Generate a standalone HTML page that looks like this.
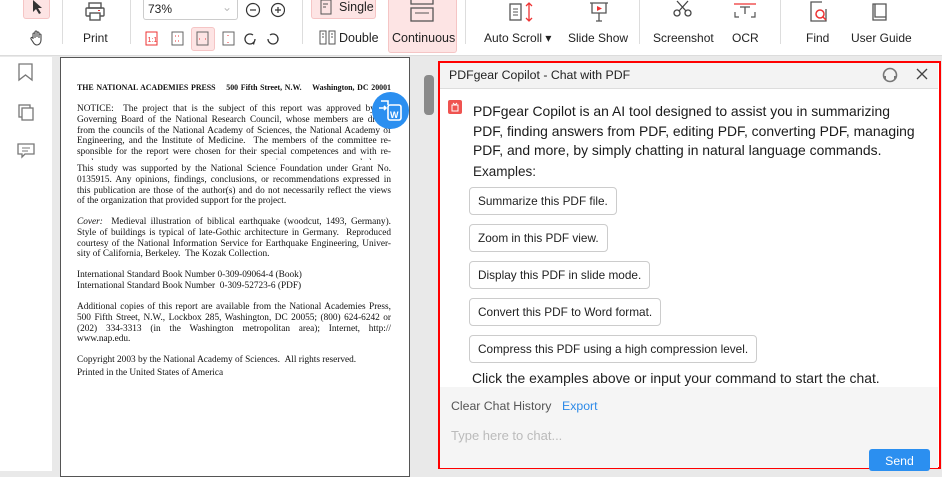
<!DOCTYPE html>
<html><head><meta charset="utf-8"><style>
*{box-sizing:border-box;margin:0;padding:0}
body{width:942px;height:471px;overflow:hidden;background:#e9e9e9;font-family:"Liberation Sans",sans-serif;position:relative;color:#222}
.a{position:absolute}
.tb{left:0;top:0;width:942px;height:56px;background:#fff;border-bottom:1px solid #dcdcdc}
.lbl{position:absolute;font-size:12px;color:#222;white-space:nowrap}
.sep{position:absolute;top:0;width:1px;height:44px;background:#ddd}
.pg{left:60px;top:57px;width:350px;height:420px;background:#fff;border:1px solid #555;font-family:"Liberation Serif",serif;font-size:9.3px;line-height:10.8px;color:#111}
.pg p{position:absolute;left:16px;width:314px}
.pg p span{display:block;height:10.8px;overflow:hidden;text-align:justify;text-align-last:justify}
.pg p span.l{text-align-last:left}
.chat{left:438px;top:61px;width:503px;height:408px;border:2.5px solid #f00;background:#fff}
.btn{position:absolute;left:29px;height:28px;border:1px solid #ccc;border-radius:4px;font-size:11.8px;padding:0 8px;line-height:26px;background:#fff;white-space:nowrap}
</style></head><body>
<div class="a tb">
  <div class="a" style="left:23px;top:0;width:27px;height:19px;background:#fde4e4;border:1px solid #f5c5c5;border-top:none;border-radius:0 0 3px 3px"></div>
  <svg class="a" style="left:31px;top:0" width="12" height="14"><path d="M2 0 L2 12 L5 9 L8 14 L10 13 L7 8 L11 8 Z" fill="#333"/></svg>
  <svg style="position:absolute;left:29px;top:29px" width="18" height="18"><path d="M4 10 V5 a1 1 0 0 1 2 0 V9 M6 8 V3 a1 1 0 0 1 2 0 V8 M8 8 V4 a1 1 0 0 1 2 0 V9 M10 9 V6 a1 1 0 0 1 2 0 V11 c0 3 -2 5 -4 5 c-2 0 -3 -1 -4 -3 L2 10 a1 1 0 0 1 2 -1" fill="none" stroke="#444" stroke-width="1.1"/></svg>
  <div class="sep" style="left:62px"></div>
  <svg class="a" style="left:84px;top:2px" width="22" height="20"><rect x="5" y="1" width="12" height="5" fill="none" stroke="#555" stroke-width="1.4"/><rect x="2" y="6" width="18" height="8" rx="1" fill="none" stroke="#555" stroke-width="1.4"/><rect x="6" y="11" width="10" height="7" fill="#fff" stroke="#555" stroke-width="1.4"/><rect x="14" y="8" width="2" height="1" fill="#e33"/></svg>
  <div class="lbl" style="left:83px;top:31px">Print</div>
  <div class="sep" style="left:130px"></div>
  <div class="a" style="left:143px;top:0;width:95px;height:20px;border:1px solid #ccc;border-top:none;border-radius:0 0 3px 3px;font-size:12px;padding:2px 4px">73%<span style="position:absolute;right:5px;top:0;color:#bbb">⌄</span></div>
  <svg class="a" style="left:245px;top:2px" width="40" height="16"><circle cx="8" cy="8" r="6.5" fill="none" stroke="#333" stroke-width="1.2"/><path d="M5 8h6" stroke="#333" stroke-width="1.2"/><circle cx="33" cy="8" r="6.5" fill="none" stroke="#333" stroke-width="1.2"/><path d="M30 8h6M33 5v6" stroke="#333" stroke-width="1.2"/></svg>
  <div class="a" style="left:191px;top:27px;width:24px;height:24px;background:#fde4e4;border:1px solid #f5c5c5;border-radius:3px"></div>
  <svg class="a" style="left:145px;top:31px" width="150" height="16">
   <rect x="1" y="1" width="11" height="13" fill="none" stroke="#e33" stroke-width="1"/><text x="2.5" y="11" font-size="7" fill="#e33" font-family="Liberation Sans">1:1</text>
   <rect x="27" y="1" width="11" height="13" fill="none" stroke="#666"/><path d="M30 5h5M30 10h5" stroke="#e33" stroke-dasharray="1 2"/>
   <rect x="52" y="1" width="11" height="13" fill="none" stroke="#666"/><path d="M54 8h1M60 8h1" stroke="#e33"/>
   <rect x="78" y="1" width="11" height="13" fill="none" stroke="#666"/><path d="M83 4v1M83 11v1" stroke="#e33"/>
   <path d="M110 8a5 5 0 1 1 -2 -4" fill="none" stroke="#333" stroke-width="1.3"/><path d="M107 12 l3 -2 -1 4z" fill="#333"/>
   <path d="M123 8a5 5 0 1 0 2 -4" fill="none" stroke="#333" stroke-width="1.3"/>
  </svg>
  <div class="sep" style="left:302px"></div>
  <div class="a" style="left:311px;top:0;width:65px;height:19px;background:#fde4e4;border:1px solid #f5c5c5;border-top:none;border-radius:0 0 3px 3px"></div>
  <svg class="a" style="left:320px;top:0" width="12" height="16"><rect x="1" y="0" width="10" height="14" fill="none" stroke="#555"/><path d="M3 4h5M3 7h3" stroke="#555"/></svg>
  <div class="lbl" style="left:339px;top:0;font-size:12.5px">Single</div>
  <svg class="a" style="left:319px;top:30px" width="18" height="15"><rect x="1" y="1" width="6" height="13" fill="none" stroke="#555"/><rect x="10" y="1" width="6" height="13" fill="none" stroke="#555"/><path d="M3 4h2M12 4h2M3 7h2M12 7h2" stroke="#555"/></svg>
  <div class="lbl" style="left:339px;top:31px;font-size:12.5px">Double</div>
  <div class="a" style="left:388px;top:0;width:69px;height:53px;background:#fde4e4;border:1px solid #f5c5c5;border-top:none;border-radius:0 0 3px 3px"></div>
  <svg class="a" style="left:409px;top:0" width="26" height="22"><path d="M2 0v4h22v-4" fill="none" stroke="#555" stroke-width="1.3"/><rect x="2" y="8" width="22" height="13" fill="none" stroke="#555" stroke-width="1.3"/><path d="M6 13h14" stroke="#555"/></svg>
  <div class="lbl" style="left:392px;top:31px;font-size:12.5px">Continuous</div>
  <div class="sep" style="left:465px"></div>
  <svg class="a" style="left:507px;top:1px" width="26" height="22"><rect x="3" y="3" width="11" height="16" fill="none" stroke="#555" stroke-width="1.3"/><path d="M6 8h5M6 11h5M6 14h5" stroke="#555"/><path d="M22 2v18M19 5l3 -3 3 3M19 17l3 3 3 -3" fill="none" stroke="#e33" stroke-width="1.3"/></svg>
  <div class="lbl" style="left:484px;top:31px">Auto Scroll ▾</div>
  <svg class="a" style="left:588px;top:1px" width="22" height="22"><path d="M2 2h18M4 2v10h14V2M11 12v8M8 20h6" fill="none" stroke="#555" stroke-width="1.3"/><path d="M9 5l5 2.5 -5 2.5z" fill="#e33"/></svg>
  <div class="lbl" style="left:568px;top:31px">Slide Show</div>
  <div class="sep" style="left:639px"></div>
  <svg class="a" style="left:672px;top:0" width="22" height="18"><circle cx="5" cy="13" r="3" fill="none" stroke="#444" stroke-width="1.3"/><circle cx="16" cy="13" r="3" fill="none" stroke="#444" stroke-width="1.3"/><path d="M7 11L16 1M14 11L5 1" stroke="#444" stroke-width="1.3"/></svg>
  <div class="lbl" style="left:653px;top:31px">Screenshot</div>
  <svg class="a" style="left:733px;top:0" width="24" height="20"><path d="M1 4h22" stroke="#e33" stroke-width="1.3"/><path d="M7 7h10M12 7v7" stroke="#555" stroke-width="1.3"/><path d="M2 12v5h4M22 12v5h-4" fill="none" stroke="#555" stroke-width="1.2"/></svg>
  <div class="lbl" style="left:732px;top:31px">OCR</div>
  <div class="sep" style="left:780px"></div>
  <svg class="a" style="left:808px;top:1px" width="22" height="22"><path d="M14 1H3v19h15V8" fill="none" stroke="#555" stroke-width="1.3"/><circle cx="12" cy="13" r="4" fill="none" stroke="#e33" stroke-width="1.5"/><path d="M15 16l3 3" stroke="#e33" stroke-width="1.5"/></svg>
  <div class="lbl" style="left:806px;top:31px">Find</div>
  <svg class="a" style="left:870px;top:1px" width="20" height="22"><path d="M3 3h13v16H3zM5 3v13h11" fill="none" stroke="#555" stroke-width="1.3"/></svg>
  <div class="lbl" style="left:851px;top:31px">User Guide</div>
</div>
<div class="a" style="left:0;top:57px;width:52px;height:414px;background:#fff"></div>
<svg class="a" style="left:16px;top:62px" width="20" height="110"><path d="M3 2h13v16l-6.5-5L3 18z" fill="none" stroke="#777" stroke-width="1.3"/><rect x="3" y="43" width="11" height="12" fill="none" stroke="#777" stroke-width="1.3"/><rect x="6" y="46" width="11" height="12" fill="#fff" stroke="#777" stroke-width="1.3"/><path d="M2 82h16v10h-9l-3 3v-3H2z" fill="none" stroke="#777" stroke-width="1.3"/><path d="M6 86h8M6 89h6" stroke="#777"/></svg>
<div class="a pg">
  <p style="top:25px;font-weight:bold;font-size:7.9px"><span>THE NATIONAL ACADEMIES PRESS &nbsp;&nbsp; 500 Fifth Street, N.W. &nbsp;&nbsp; Washington, DC 20001</span></p>
  <p style="top:46px"><span>NOTICE: &nbsp;The project that is the subject of this report was approved by the</span><span>Governing Board of the National Research Council, whose members are drawn</span><span>from the councils of the National Academy of Sciences, the National Academy of</span><span>Engineering, and the Institute of Medicine. &nbsp;The members of the committee re-</span><span>sponsible for the report were chosen for their special competences and with re-</span><span style="height:2px">gard for appropriate balance.</span></p>
  <p style="top:106px"><span>This study was supported by the National Science Foundation under Grant No.</span><span>0135915. Any opinions, findings, conclusions, or recommendations expressed in</span><span>this publication are those of the author(s) and do not necessarily reflect the views</span><span class="l">of the organization that provided support for the project.</span></p>
  <p style="top:159px"><span><i>Cover:</i> &nbsp;Medieval illustration of biblical earthquake (woodcut, 1493, Germany).</span><span>Style of buildings is typical of late-Gothic architecture in Germany. &nbsp;Reproduced</span><span>courtesy of the National Information Service for Earthquake Engineering, Univer-</span><span class="l">sity of California, Berkeley. &nbsp;The Kozak Collection.</span></p>
  <p style="top:212px"><span class="l">International Standard Book Number 0-309-09064-4 (Book)</span><span class="l">International Standard Book Number &nbsp;0-309-52723-6 (PDF)</span></p>
  <p style="top:244px"><span>Additional copies of this report are available from the National Academies Press,</span><span>500 Fifth Street, N.W., Lockbox 285, Washington, DC 20055; (800) 624-6242 or</span><span>(202) 334-3313 (in the Washington metropolitan area); Internet, http://</span><span class="l">www.nap.edu.</span></p>
  <p style="top:297px"><span class="l">Copyright 2003 by the National Academy of Sciences. &nbsp;All rights reserved.</span></p>
  <p style="top:310px"><span class="l">Printed in the United States of America</span></p>
</div>
<div class="a" style="left:372px;top:92px;width:37px;height:37px;border-radius:50%;background:#2b8ff0"></div>
<svg class="a" style="left:378px;top:98px" width="26" height="26"><rect x="10" y="7" width="13" height="15" rx="2" fill="none" stroke="#fff" stroke-width="1.6"/><text x="12" y="20" font-size="9" font-weight="bold" fill="#fff" font-family="Liberation Sans">W</text><path d="M3 3h7v4M1 10h7M6 8l2 2 -2 2" fill="none" stroke="#fff" stroke-width="1.6"/></svg>
<div class="a" style="left:424px;top:75px;width:10px;height:40px;background:#8a8a8a;border-radius:4px"></div>
<div class="a chat">
  <div class="a" style="left:0;top:0;width:498px;height:26px;background:#f3f3f3;border-bottom:1px solid #ddd;font-size:12.3px;padding:5px 9px">PDFgear Copilot - Chat with PDF</div>
  <svg class="a" style="left:441px;top:3px" width="18" height="18"><circle cx="9" cy="9" r="6.5" fill="none" stroke="#777" stroke-width="1.6"/><path d="M3 10h2v3H3zM13 10h2v3h-2z" fill="#777"/></svg>
  <svg class="a" style="left:476px;top:5px" width="12" height="12"><path d="M1 1l10 10M11 1L1 11" stroke="#444" stroke-width="1.3"/></svg>
  <div class="a" style="left:8px;top:37px;width:14px;height:14px;background:#ef5350;border-radius:2px"></div>
  <svg class="a" style="left:8px;top:37px" width="14" height="14"><path d="M4 5h6v6H4zM5 3l2 2 2 -2" fill="none" stroke="#fff" stroke-width="1"/></svg>
  <div class="a" style="left:33px;top:39px;font-size:13.9px;line-height:19.5px;color:#1a1a1a;white-space:nowrap">PDFgear Copilot is an AI tool designed to assist you in summarizing<br>PDF, finding answers from PDF, editing PDF, converting PDF, managing<br>PDF, and more, by simply chatting in natural language commands.</div>
  <div class="a" style="left:33px;top:101px;font-size:13.5px">Examples:</div>
  <div class="btn" style="top:124px">Summarize this PDF file.</div>
  <div class="btn" style="top:161px">Zoom in this PDF view.</div>
  <div class="btn" style="top:198px">Display this PDF in slide mode.</div>
  <div class="btn" style="top:235px">Convert this PDF to Word format.</div>
  <div class="btn" style="top:272px">Compress this PDF using a high compression level.</div>
  <div class="a" style="left:32px;top:307px;font-size:13.9px;white-space:nowrap">Click the examples above or input your command to start the chat.</div>
  <div class="a" style="left:0;top:324px;width:498px;height:81px;background:#f5f5f5"></div>
  <div class="a" style="left:11px;top:336px;font-size:12.3px;color:#555">Clear Chat History</div>
  <div class="a" style="left:122px;top:336px;font-size:12.3px;color:#2d8ae8">Export</div>
  <div class="a" style="left:11px;top:365px;font-size:13px;color:#bbb">Type here to chat...</div>
  <div class="a" style="left:429px;top:386px;width:61px;height:22px;background:#2b8ff0;border-radius:3px;color:#fff;font-size:12.3px;text-align:center;padding-top:5px">Send</div>
</div>
</body></html>
